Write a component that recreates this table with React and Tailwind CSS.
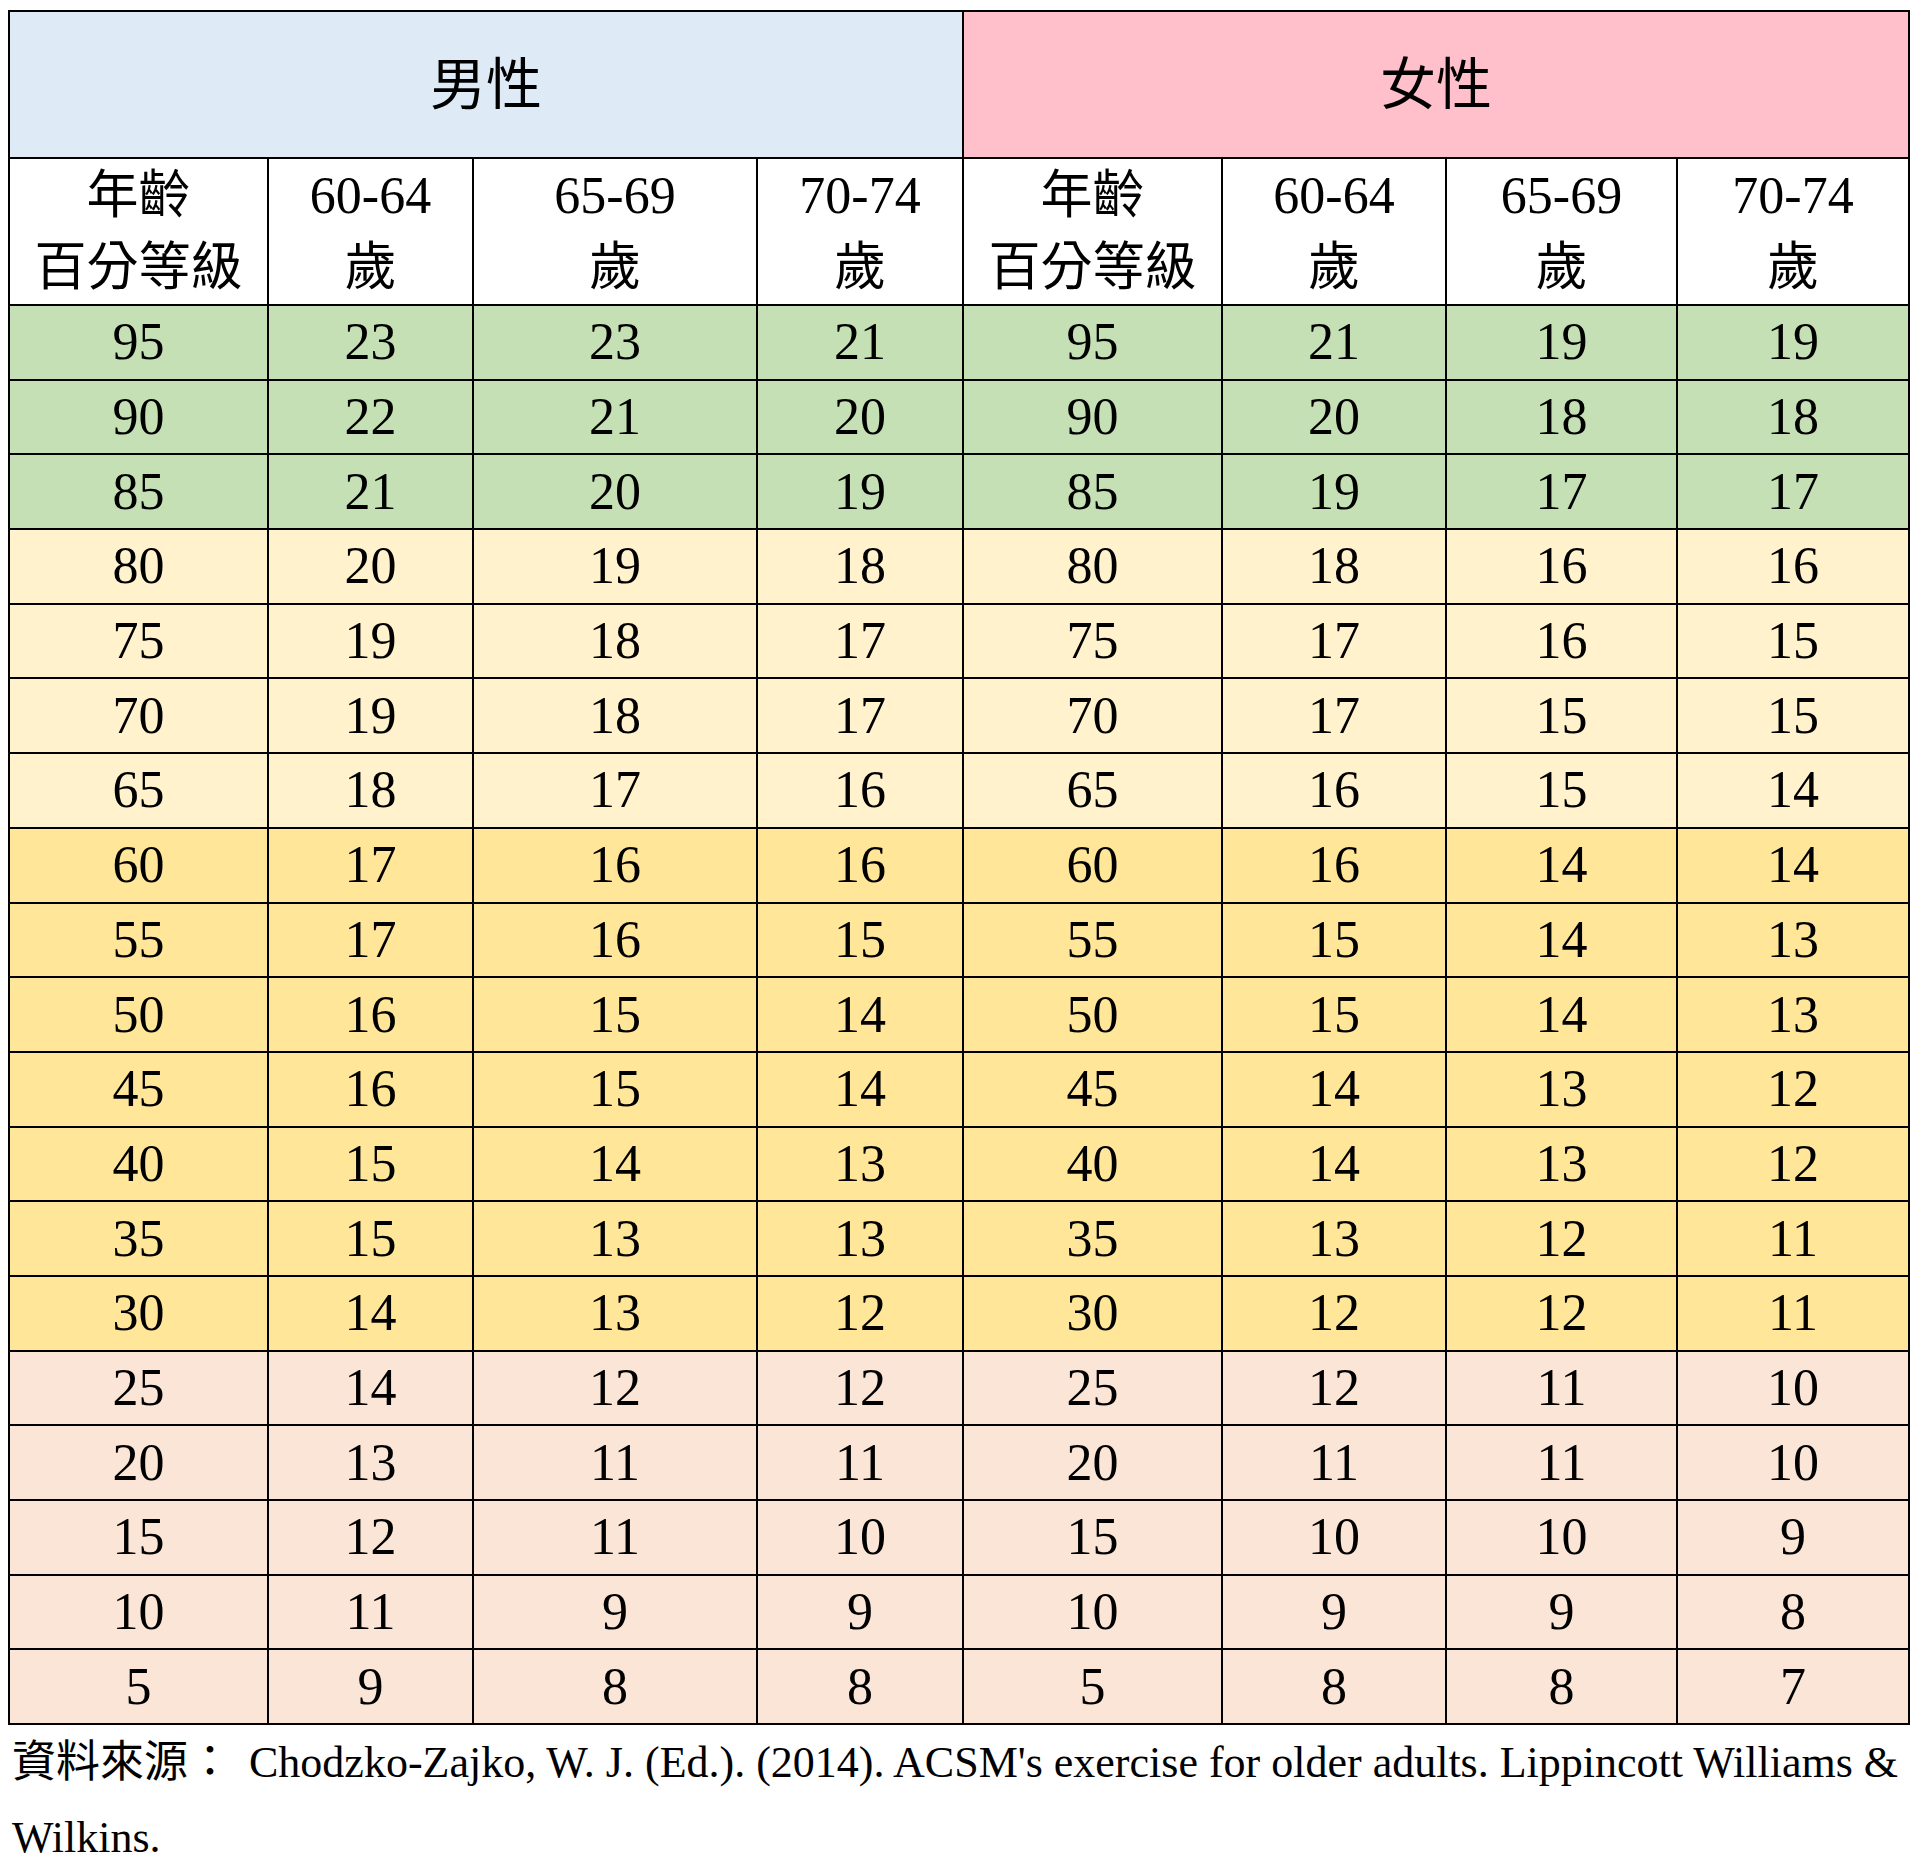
import React from "react";

const rows = [
  { p: 95, m: [23, 23, 21], f: [21, 19, 19], bg: "bg-[#C5E0B4]" },
  { p: 90, m: [22, 21, 20], f: [20, 18, 18], bg: "bg-[#C5E0B4]" },
  { p: 85, m: [21, 20, 19], f: [19, 17, 17], bg: "bg-[#C5E0B4]" },
  { p: 80, m: [20, 19, 18], f: [18, 16, 16], bg: "bg-[#FFF2CC]" },
  { p: 75, m: [19, 18, 17], f: [17, 16, 15], bg: "bg-[#FFF2CC]" },
  { p: 70, m: [19, 18, 17], f: [17, 15, 15], bg: "bg-[#FFF2CC]" },
  { p: 65, m: [18, 17, 16], f: [16, 15, 14], bg: "bg-[#FFF2CC]" },
  { p: 60, m: [17, 16, 16], f: [16, 14, 14], bg: "bg-[#FFE699]" },
  { p: 55, m: [17, 16, 15], f: [15, 14, 13], bg: "bg-[#FFE699]" },
  { p: 50, m: [16, 15, 14], f: [15, 14, 13], bg: "bg-[#FFE699]" },
  { p: 45, m: [16, 15, 14], f: [14, 13, 12], bg: "bg-[#FFE699]" },
  { p: 40, m: [15, 14, 13], f: [14, 13, 12], bg: "bg-[#FFE699]" },
  { p: 35, m: [15, 13, 13], f: [13, 12, 11], bg: "bg-[#FFE699]" },
  { p: 30, m: [14, 13, 12], f: [12, 12, 11], bg: "bg-[#FFE699]" },
  { p: 25, m: [14, 12, 12], f: [12, 11, 10], bg: "bg-[#FBE5D6]" },
  { p: 20, m: [13, 11, 11], f: [11, 11, 10], bg: "bg-[#FBE5D6]" },
  { p: 15, m: [12, 11, 10], f: [10, 10, 9], bg: "bg-[#FBE5D6]" },
  { p: 10, m: [11, 9, 9], f: [9, 9, 8], bg: "bg-[#FBE5D6]" },
  { p: 5, m: [9, 8, 8], f: [8, 8, 7], bg: "bg-[#FBE5D6]" },
];

const cell = "border-2 border-black text-center align-middle p-0";

const SubHeader = () => (
  <>
    <th className={`${cell} font-normal`}>
      年齡
      <br />
      百分等級
    </th>
    {["60-64", "65-69", "70-74"].map((age) => (
      <th key={age} className={`${cell} font-normal`}>
        {age}
        <br />
        歲
      </th>
    ))}
  </>
);

export default function App() {
  return (
    <div className="w-[1920px] min-h-[1870px] bg-white pt-[10px] pl-[8px] text-black font-['Liberation_Serif','Noto_Sans_CJK_TC',serif]">
      <table className="table-fixed border-collapse w-[1900px]">
        <colgroup>
          <col className="w-[259px]" />
          <col className="w-[205px]" />
          <col className="w-[284px]" />
          <col className="w-[206px]" />
          <col className="w-[259px]" />
          <col className="w-[224px]" />
          <col className="w-[231px]" />
          <col className="w-[232px]" />
        </colgroup>
        <thead>
          <tr className="h-[147px] leading-[60px]">
            <th colSpan={4} className={`${cell} font-normal bg-[#DEEBF7] text-[56px]`}>
              男性
            </th>
            <th colSpan={4} className={`${cell} font-normal bg-[#FFC0CB] text-[56px]`}>
              女性
            </th>
          </tr>
          <tr className="h-[147px] text-[52px] leading-[72px]">
            <SubHeader />
            <SubHeader />
          </tr>
        </thead>
        <tbody className="text-[52px] leading-[60px]">
          {rows.map((r) => (
            <tr key={r.p} className={`h-[74.7px] ${r.bg}`}>
              <td className={cell}>{r.p}</td>
              {r.m.map((v, i) => (
                <td key={"m" + i} className={cell}>
                  {v}
                </td>
              ))}
              <td className={cell}>{r.p}</td>
              {r.f.map((v, i) => (
                <td key={"f" + i} className={cell}>
                  {v}
                </td>
              ))}
            </tr>
          ))}
        </tbody>
      </table>
      <p className="pl-[4px] text-[44px] leading-[75px] whitespace-nowrap">
        <span className="mr-[6px]">資料來源：</span>&nbsp;Chodzko-Zajko, W. J. (Ed.). (2014). ACSM's exercise for older adults. Lippincott Williams &amp;
        <br />
        Wilkins.
      </p>
    </div>
  );
}
